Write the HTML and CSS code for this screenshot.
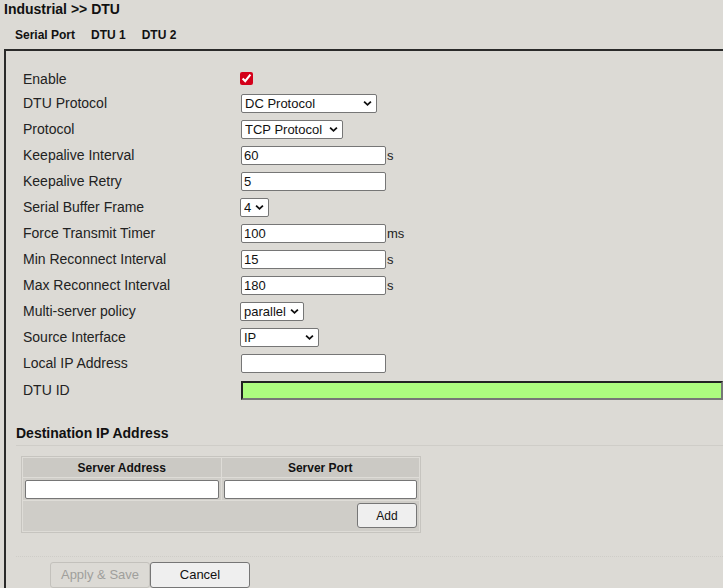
FILE: index.html
```html
<!DOCTYPE html>
<html>
<head>
<meta charset="utf-8">
<title>Industrial &gt;&gt; DTU</title>
<link rel="stylesheet" href="styles.css">
</head>
<body>
<h1 class="title">Industrial &gt;&gt; DTU</h1>
<nav class="tabs">
  <span class="tab">Serial Port</span>
  <span class="tab">DTU 1</span>
  <span class="tab">DTU 2</span>
</nav>
<div class="panel">
  <div class="form">
    <label class="lbl">Enable</label>
    <div class="ctl"><input type="checkbox" class="chk" checked></div>

    <label class="lbl">DTU Protocol</label>
    <div class="ctl"><select class="sel w136"><option>DC Protocol</option></select></div>

    <label class="lbl">Protocol</label>
    <div class="ctl"><select class="sel w102"><option>TCP Protocol</option></select></div>

    <label class="lbl">Keepalive Interval</label>
    <div class="ctl"><input class="txt" value="60"><span class="unit">s</span></div>

    <label class="lbl">Keepalive Retry</label>
    <div class="ctl"><input class="txt" value="5"></div>

    <label class="lbl">Serial Buffer Frame</label>
    <div class="ctl"><select class="sel w29"><option>4</option></select></div>

    <label class="lbl">Force Transmit Timer</label>
    <div class="ctl"><input class="txt" value="100"><span class="unit">ms</span></div>

    <label class="lbl">Min Reconnect Interval</label>
    <div class="ctl"><input class="txt" value="15"><span class="unit">s</span></div>

    <label class="lbl">Max Reconnect Interval</label>
    <div class="ctl"><input class="txt" value="180"><span class="unit">s</span></div>

    <label class="lbl">Multi-server policy</label>
    <div class="ctl"><select class="sel w64"><option>parallel</option></select></div>

    <label class="lbl">Source Interface</label>
    <div class="ctl"><select class="sel w79"><option>IP</option></select></div>

    <label class="lbl">Local IP Address</label>
    <div class="ctl"><input class="txt" value=""></div>

    <label class="lbl">DTU ID</label>
    <div class="ctl"><input class="txt dtuid" value=""></div>
  </div>

  <h2 class="section">Destination IP Address</h2>

  <table class="dest">
    <thead>
      <tr><th>Server Address</th><th>Server Port</th></tr>
    </thead>
    <tbody>
      <tr><td><input class="cellin"></td><td><input class="cellin"></td></tr>
      <tr><td class="addcell" colspan="2"><button class="btn add">Add</button></td></tr>
    </tbody>
  </table>

  <div class="actions">
    <button class="btn big" disabled>Apply &amp; Save</button>
    <button class="btn big">Cancel</button>
  </div>
</div>
</body>
</html>
```

FILE: styles.css
```css
html, body {
  margin: 0;
  padding: 0;
  background: #dcdad5;
  font-family: "Liberation Sans", Arial, sans-serif;
  color: #1a1a1a;
  overflow: hidden;
  height: 588px;
}

.title {
  margin: 0;
  padding: 1px 0 0 4px;
  font-size: 14px;
  line-height: 17px;
  font-weight: bold;
  color: #111;
}

.tabs {
  display: flex;
  gap: 16px;
  padding: 10px 0 0 15px;
  height: 21px;
  font-size: 12px;
  line-height: 14px;
  font-weight: bold;
  color: #111;
}

.panel {
  box-sizing: border-box;
  margin-left: 4px;
  border-left: 2px solid #2a2a2a;
  border-top: 2px solid #2a2a2a;
  padding: 17px 0 0 10px;
  height: 539px;
  overflow: hidden;
}

.form {
  display: grid;
  grid-template-columns: 218px 1fr;
  grid-template-rows: 22px repeat(11, 26px) 28px;
  align-items: center;
  padding-left: 7px;
}

.lbl {
  color: #222;
  font-size: 14px;
  line-height: 16px;
}

.ctl {
  display: flex;
  align-items: center;
  height: 100%;
}

.chk {
  margin: 0;
  width: 13px;
  height: 13px;
  accent-color: #d4001a;
  position: relative;
  left: -1px;
  top: -1px;
}

.sel {
  -webkit-appearance: none;
  appearance: none;
  box-sizing: border-box;
  height: 19px;
  margin: 0;
  font-family: "Liberation Sans", Arial, sans-serif;
  font-size: 13px;
  line-height: 17px;
  color: #111;
  background-color: #fff;
  background-image: url("data:image/svg+xml,%3Csvg xmlns='http://www.w3.org/2000/svg' width='10' height='7' viewBox='0 0 10 7'%3E%3Cpath d='M1.2 1.3 L5 5 L8.8 1.3' fill='none' stroke='%23111' stroke-width='2'/%3E%3C/svg%3E");
  background-repeat: no-repeat;
  background-position: right 4px center;
  background-size: 9px 7px;
  border: 1px solid #767676;
  border-radius: 2px;
  padding: 0 0 0 3px;
}
.w136 { width: 136px; }
.w102 { width: 102px; }
.w29 { width: 29px; margin-left: -1px; }
.w64 { width: 64px; margin-left: -1px; }
.w79 { width: 79px; margin-left: -1px; }

.txt {
  box-sizing: border-box;
  width: 145px;
  height: 19px;
  margin: 0;
  padding: 0 2px;
  border: 1px solid #767676;
  border-radius: 2px;
  background: #fff;
  font-family: "Liberation Sans", Arial, sans-serif;
  font-size: 13px;
  color: #111;
}

.unit {
  margin-left: 1px;
  font-size: 13px;
  color: #222;
}

.dtuid {
  width: 482px;
  border-radius: 0;
  border-style: solid;
  border-width: 2px;
  border-color: #222 #777 #777 #222;
  background: #adfc7f;
}

.section {
  margin: 21px 0 0 0;
  padding: 0 0 4px 0;
  font-size: 14px;
  font-weight: bold;
  line-height: 16px;
  color: #111;
  border-bottom: 1px solid #cfcdc8;
}

.dest {
  margin: 10px 0 0 5px;
  width: 400px;
  border: 1px solid #c6c4bf;
  border-spacing: 1px;
  background: #dedcd7;
  font-size: 12px;
  font-family: "Liberation Sans", Arial, sans-serif;
}

.dest th {
  background: #cbc9c4;
  height: 19px;
  padding: 0;
  font-weight: bold;
  color: #111;
  width: 50%;
}

.dest td {
  background: #cfcdc8;
  padding: 1px 2px 1px 2px;
  height: 20px;
}

.cellin {
  box-sizing: border-box;
  width: 100%;
  height: 19px;
  margin: 0;
  border: 1px solid #767676;
  border-radius: 2px;
  background: #fff;
  display: block;
}

.dest td.addcell {
  text-align: right;
  padding: 2px 2px 3px 2px;
  height: 25px;
}

.btn {
  font-family: "Liberation Sans", Arial, sans-serif;
  background: #efefef;
  border: 1px solid #767676;
  border-radius: 3px;
  color: #111;
  margin: 0;
  padding: 0;
}

.add {
  width: 60px;
  height: 25px;
  font-size: 12px;
  display: inline-block;
  vertical-align: top;
}

.actions {
  margin-top: 23px;
  border-top: 1px dotted #cfcdc8;
  padding: 5px 0 0 34px;
  display: flex;
}

.big {
  width: 100px;
  height: 26px;
  font-size: 13px;
  line-height: 22px;
}

.big:disabled {
  width: 100px;
  background: #dcdad5;
  border-color: #c3c1bc;
  color: #a09f9c;
}
```
